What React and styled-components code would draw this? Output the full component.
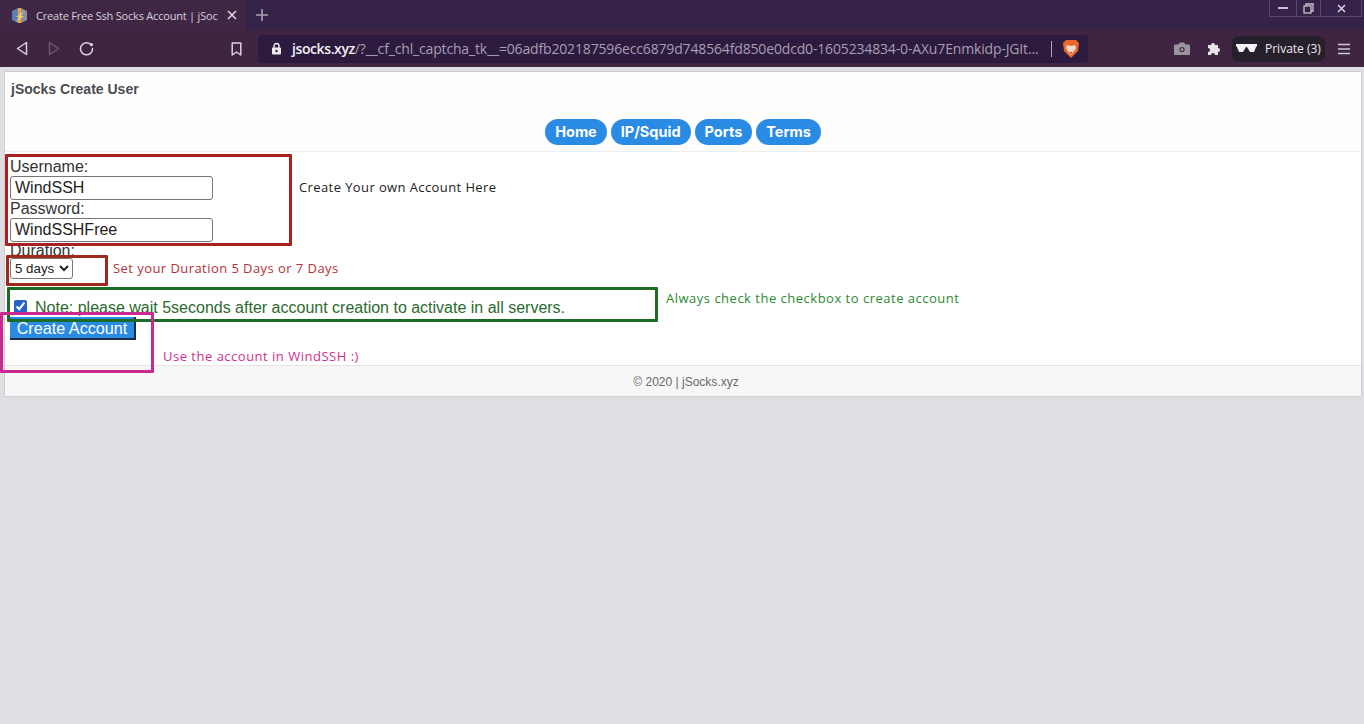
import React from 'react';
import styled, { createGlobalStyle } from 'styled-components';

const GlobalStyle = createGlobalStyle`
  html, body { margin: 0; padding: 0; height: 100%; background: #dfdfe3; overflow: hidden; }
  body { font-family: "Liberation Sans", Arial, sans-serif; }
  * { box-sizing: border-box; }
`;

const Page = styled.div`
  width: 1364px;
  height: 724px;
  display: flex;
  flex-direction: column;
`;

const TabStrip = styled.div`
  height: 30px;
  background: #35234a;
  display: flex;
  align-items: flex-start;
  position: relative;
`;

const Tab = styled.div`
  width: 246px;
  height: 30px;
  background: #3f2645;
  display: flex;
  align-items: center;
  padding-left: 11px;
  color: #d6d0da;
  font-size: 11px;
  font-family: "Open Sans", sans-serif;
`;

const TabTitle = styled.span`
  width: 184px;
  margin-left: 8px;
  white-space: nowrap;
  letter-spacing: -0.2px;
`;

const TabClose = styled.svg`
  margin-left: 7px;
  flex-shrink: 0;
`;

const NewTab = styled.svg`
  margin: 8px 0 0 9px;
`;

const WindowControls = styled.div`
  position: absolute;
  top: 0;
  right: 2px;
  height: 17px;
  display: flex;
  border: 1px solid #5a4a6e;
  border-top: none;
`;

const WindowButton = styled.div`
  width: ${p => p.$w}px;
  display: flex;
  align-items: center;
  justify-content: center;
  border-left: ${p => (p.$first ? 'none' : '1px solid #5a4a6e')};
`;

const Toolbar = styled.div`
  height: 37px;
  background: #3f2542;
  display: flex;
  align-items: center;
  padding-left: 16px;
`;

const ToolIcon = styled.svg`
  margin-left: ${p => p.$ml || 0}px;
  flex-shrink: 0;
`;

const AddressBar = styled.div`
  width: 830px;
  height: 28px;
  margin-left: 16px;
  background: #2c1a3f;
  border-radius: 4px;
  display: flex;
  align-items: center;
  padding-left: 13px;
  font-family: "Open Sans", sans-serif;
  font-size: 14px;
  color: #a79fb0;
`;

const Url = styled.span`
  width: 756px;
  margin-left: 10px;
  white-space: nowrap;
  letter-spacing: -0.16px;
  b { font-weight: 600; color: #f2f0f4; letter-spacing: -0.4px; }
`;

const UrlDivider = styled.span`
  width: 1px;
  height: 16px;
  margin-left: 3px;
  background: #b0a8b8;
`;

const LionSlot = styled.span`
  display: flex;
  margin-left: 10px;
`;

const PrivateBadge = styled.div`
  width: 93px;
  height: 26px;
  margin-left: 10px;
  background: #25202c;
  border-radius: 7px;
  display: flex;
  align-items: center;
  padding-left: 4px;
  color: #eeeaf0;
  font-family: "Open Sans", sans-serif;
  font-size: 12px;
  gap: 8px;
`;

const Content = styled.div`
  flex: 1;
  padding: 4px 2px 0 4px;
`;

const Card = styled.div`
  position: relative;
  height: 326px;
  background: #fff;
  border: 1px solid #d0d0d2;
  display: flex;
  flex-direction: column;
`;

const CardHeader = styled.div`
  height: 80px;
  padding: 9px 6px 0;
  border-bottom: 1px solid #eeeeee;
  background: #fffefd;
`;

const CardTitle = styled.div`
  font-size: 14px;
  line-height: 16px;
  font-weight: 700;
  color: #4a4d52;
`;

const Nav = styled.div`
  display: flex;
  justify-content: center;
  gap: 4px;
  margin-top: 22px;
`;

const Pill = styled.div`
  height: 26px;
  padding: 0 10px;
  border-radius: 13px;
  background: #2a8be4;
  color: #fff;
  font-family: "Inter", "Open Sans", sans-serif;
  font-size: 14.5px;
  font-weight: 700;
  line-height: 26px;
`;

const Form = styled.div`
  flex: 1;
  padding: 5px 5px 0;
  font-size: 16px;
  color: #222;
`;

const FieldLabel = styled.div`
  height: 20px;
  line-height: 20px;
  color: #333;
`;

const TextInput = styled.input`
  display: block;
  width: 203px;
  height: 24px;
  margin: -1px 0;
  padding: 0 4px;
  border: 1px solid #767676;
  border-radius: 3px;
  background: #fff;
  font: 16px "Liberation Sans", sans-serif;
  color: #222;
`;

const DurationSelect = styled.select`
  display: block;
  width: 63px;
  height: 21px;
  margin-top: -3px;
  font: 13.3px "Liberation Sans", sans-serif;
  color: #222;
  background: #fff;
  border: 1px solid #767676;
  border-radius: 3px;
`;

const NoteRow = styled.label`
  display: flex;
  align-items: center;
  height: 20px;
  margin-top: 19px;
  color: #2b6a30;
  line-height: 20px;
`;

const Check = styled.input`
  width: 13px;
  height: 13px;
  margin: -3px 8px 0 4px;
  accent-color: #2563c9;
`;

const SubmitButton = styled.button`
  display: block;
  width: 126px;
  height: 23px;
  margin-top: -1px;
  padding: 0;
  border: none;
  border-right: 2px solid #1c2a44;
  border-bottom: 2px solid #1c2a44;
  background: #2a8be4;
  color: #fff;
  font: 16.2px "Liberation Sans", sans-serif;
  line-height: 20px;
`;

const Footer = styled.div`
  height: 31px;
  padding-left: 6px;
  background: #f7f7f7;
  border-top: 1px solid #e4e4e4;
  text-align: center;
  line-height: 32px;
  font-size: 12px;
  color: #66696d;
`;

/* screenshot annotations drawn on top of the form */
const Mark = styled.div`
  position: absolute;
  left: ${p => p.$x}px;
  top: ${p => p.$y}px;
  width: ${p => p.$w}px;
  height: ${p => p.$h}px;
  border: 3px solid ${p => p.$c};
  border-radius: 1px;
  pointer-events: none;
`;

const Note = styled.div`
  position: absolute;
  left: ${p => p.$x}px;
  top: ${p => p.$y}px;
  color: ${p => p.$c};
  font-family: "Open Sans", sans-serif;
  font-size: 13px;
  line-height: 16px;
  letter-spacing: ${p => p.$ls || 0.5}px;
  white-space: nowrap;
`;

const Favicon = () => (
  <svg width="17" height="17" viewBox="0 0 17 17">
    <path d="M1 4l6-3v15l-6-3z" fill="#5b7fb5" />
    <path d="M7 1l3 0v15l-3 0z" fill="#e5a93a" />
    <path d="M10 1l6 3v9l-6 3z" fill="#8a8fa5" />
    <path d="M5 10l8-6-3 5 3 0-8 6 3-5z" fill="#f2cf62" />
  </svg>
);

const BraveLion = () => (
  <svg width="18" height="20" viewBox="0 0 18 20">
    <path d="M4 1h10l3 3-1 8-7 7-7-7-1-8z" fill="#e8682c" />
    <path d="M5 6l4 1 4-1 1 3-3 5-2 2-2-2-3-5z" fill="#f6d9c8" />
    <path d="M7 13h4l-2 2z" fill="#c9461c" />
  </svg>
);

export default function App() {
  return (
    <Page>
      <GlobalStyle />
      <TabStrip>
        <Tab>
          <Favicon />
          <TabTitle>Create Free Ssh Socks Account | jSoc</TabTitle>
          <TabClose width="10" height="10" viewBox="0 0 10 10">
            <path d="M1 1l8 8M9 1l-8 8" stroke="#ddd8e0" strokeWidth="1.6" />
          </TabClose>
        </Tab>
        <NewTab width="14" height="14" viewBox="0 0 14 14">
          <path d="M7 1v12M1 7h12" stroke="#a9a2b2" strokeWidth="1.6" />
        </NewTab>
        <WindowControls>
          <WindowButton $w={26} $first>
            <svg width="10" height="4" viewBox="0 0 10 4"><path d="M0 2h10" stroke="#c9c4cf" strokeWidth="2" /></svg>
          </WindowButton>
          <WindowButton $w={24}>
            <svg width="11" height="11" viewBox="0 0 11 11" fill="none" stroke="#c9c4cf" strokeWidth="1.3">
              <path d="M3 3V1h7v7H8" /><rect x="1" y="3" width="7" height="7" />
            </svg>
          </WindowButton>
          <WindowButton $w={41}>
            <svg width="9" height="9" viewBox="0 0 9 9"><path d="M1 1l7 7M8 1l-7 7" stroke="#d8d3dc" strokeWidth="1.5" /></svg>
          </WindowButton>
        </WindowControls>
      </TabStrip>

      <Toolbar>
        <ToolIcon width="12" height="15" viewBox="0 0 12 15" fill="none">
          <path d="M10.500 1.500v12L1.500 7.500z" stroke="#d8d3dc" strokeWidth="1.500" strokeLinejoin="round" />
        </ToolIcon>
        <ToolIcon $ml={20} width="12" height="15" viewBox="0 0 12 15" fill="none">
          <path d="M1.500 1.500v12l9-6z" stroke="#6b5a70" strokeWidth="1.500" strokeLinejoin="round" />
        </ToolIcon>
        <ToolIcon $ml={19} width="15" height="15" viewBox="0 0 15 15" fill="none">
          <path d="M12.500 4.500a6 6 0 1 0 1 3" stroke="#d8d3dc" strokeWidth="1.500" strokeLinecap="round" />
          <circle cx="12.500" cy="3.500" r="1.600" fill="#d8d3dc" />
        </ToolIcon>
        <ToolIcon $ml={137} width="11" height="14" viewBox="0 0 11 14" fill="none">
          <path d="M1.200 1h8.600v12L5.500 10l-4.300 3z" stroke="#d8d3dc" strokeWidth="1.500" strokeLinejoin="round" />
        </ToolIcon>
        <AddressBar>
          <svg width="11" height="13" viewBox="0 0 11 13">
            <path d="M3 6V4a2.500 2.500 0 0 1 5 0v2" fill="none" stroke="#eeeaf0" strokeWidth="1.400" />
            <rect x="1" y="5.500" width="9" height="7" rx="1" fill="#eeeaf0" />
            <circle cx="5.500" cy="9" r="1.200" fill="#2c1a3f" />
          </svg>
          <Url><b>jsocks.xyz</b>/?__cf_chl_captcha_tk__=06adfb202187596ecc6879d748564fd850e0dcd0-1605234834-0-AXu7Enmkidp-JGIt...</Url>
          <UrlDivider />
          <LionSlot><BraveLion /></LionSlot>
        </AddressBar>
        <ToolIcon $ml={86} width="16" height="13" viewBox="0 0 16 13">
          <path d="M1 2.500h3.500L6 .5h4l1.500 2H15a1 1 0 0 1 1 1V12a1 1 0 0 1-1 1H1a1 1 0 0 1-1-1V3.500a1 1 0 0 1 1-1z" fill="#9a949e" />
          <circle cx="8" cy="7.500" r="2.600" fill="#3f2542" />
          <circle cx="8" cy="7.500" r="1.500" fill="#9a949e" />
        </ToolIcon>
        <ToolIcon $ml={17} width="15" height="15" viewBox="0 0 15 15">
          <path d="M1 4h3a2 2 0 1 1 4 0h3v3a2 2 0 1 1 0 4v3H8a2 2 0 1 0-4 0H1v-3a2 2 0 1 0 0-4z" fill="#e8e4ea" />
        </ToolIcon>
        <PrivateBadge>
          <svg width="21" height="9" viewBox="0 0 21 9">
            <path d="M0 0h21v2l-1 1-2 5h-4l-3-5h-1L7 8H3L1 3 0 2z" fill="#f4f2f5" />
          </svg>
          <span>Private (3)</span>
        </PrivateBadge>
        <ToolIcon $ml={13} width="12" height="12" viewBox="0 0 12 12">
          <path d="M0 1.500h12M0 6h12M0 10.500h12" stroke="#cfc9d4" strokeWidth="1.600" />
        </ToolIcon>
      </Toolbar>

      <Content>
        <Card>
          <CardHeader>
            <CardTitle>jSocks Create User</CardTitle>
            <Nav>
              <Pill>Home</Pill>
              <Pill>IP/Squid</Pill>
              <Pill>Ports</Pill>
              <Pill>Terms</Pill>
            </Nav>
          </CardHeader>
          <Form>
            <FieldLabel>Username:</FieldLabel>
            <TextInput defaultValue="WindSSH" />
            <FieldLabel>Password:</FieldLabel>
            <TextInput defaultValue="WindSSHFree" />
            <FieldLabel>Duration:</FieldLabel>
            <DurationSelect defaultValue="5">
              <option value="5">5 days</option>
              <option value="7">7 days</option>
            </DurationSelect>
            <NoteRow>
              <Check type="checkbox" defaultChecked />
              Note: please wait 5seconds after account creation to activate in all servers.
            </NoteRow>
            <SubmitButton>Create Account</SubmitButton>
          </Form>
          <Footer>© 2020 | jSocks.xyz</Footer>

          <Mark $x={0} $y={82} $w={287} $h={92} $c="#a82024" />
          <Mark $x={1} $y={183} $w={102} $h={31} $c="#9e2a1c" />
          <Mark $x={2} $y={215} $w={651} $h={35} $c="#1c6b24" />
          <Mark $x={-5} $y={240} $w={154} $h={61} $c="#c92a90" />
          <Note $x={294} $y={107} $c="#222" $ls={0.4}>Create Your own Account Here</Note>
          <Note $x={108} $y={188} $c="#b5303a" $ls={0.44}>Set your Duration 5 Days or 7 Days</Note>
          <Note $x={661} $y={218} $c="#2c8a30">Always check the checkbox to create account</Note>
          <Note $x={158} $y={276} $c="#d0308f">Use the account in WindSSH :)</Note>
        </Card>
      </Content>
    </Page>
  );
}
